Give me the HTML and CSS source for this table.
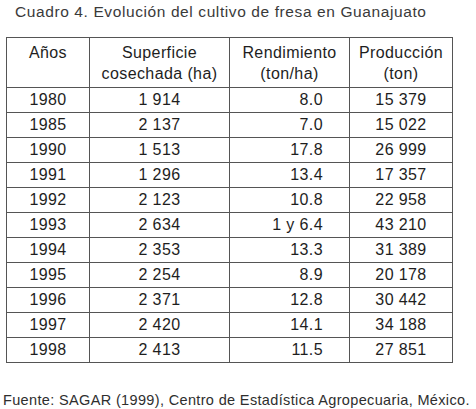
FILE: index.html
```html
<!DOCTYPE html>
<html lang="es">
<head>
<meta charset="utf-8">
<title>Cuadro 4</title>
<link rel="stylesheet" href="styles.css">
</head>
<body>
<div class="page">
  <p class="caption">Cuadro 4. Evolución del cultivo de fresa en Guanajuato</p>
  <table class="data">
    <colgroup>
      <col class="c1"><col class="c2"><col class="c3"><col class="c4">
    </colgroup>
    <thead>
      <tr>
        <th>Años<br>&nbsp;</th>
        <th>Superficie<br>cosechada (ha)</th>
        <th>Rendimiento<br>(ton/ha)</th>
        <th>Producción<br>(ton)</th>
      </tr>
    </thead>
    <tbody>
      <tr><td>1980</td><td>1 914</td><td class="r">8.0</td><td>15 379</td></tr>
      <tr><td>1985</td><td>2 137</td><td class="r">7.0</td><td>15 022</td></tr>
      <tr><td>1990</td><td>1 513</td><td class="r">17.8</td><td>26 999</td></tr>
      <tr><td>1991</td><td>1 296</td><td class="r">13.4</td><td>17 357</td></tr>
      <tr><td>1992</td><td>2 123</td><td class="r">10.8</td><td>22 958</td></tr>
      <tr><td>1993</td><td>2 634</td><td class="r">1 y 6.4</td><td>43 210</td></tr>
      <tr><td>1994</td><td>2 353</td><td class="r">13.3</td><td>31 389</td></tr>
      <tr><td>1995</td><td>2 254</td><td class="r">8.9</td><td>20 178</td></tr>
      <tr><td>1996</td><td>2 371</td><td class="r">12.8</td><td>30 442</td></tr>
      <tr><td>1997</td><td>2 420</td><td class="r">14.1</td><td>34 188</td></tr>
      <tr><td>1998</td><td>2 413</td><td class="r">11.5</td><td>27 851</td></tr>
    </tbody>
  </table>
  <p class="source">Fuente: SAGAR (1999), Centro de Estadística Agropecuaria, México.</p>
</div>
</body>
</html>
```

FILE: styles.css
```css
html, body {
  margin: 0;
  padding: 0;
  background: #ffffff;
}
.page {
  font-family: "Liberation Sans", Arial, sans-serif;
  color: #1e1e1e;
  padding: 3px 0 0 0;
}
.caption {
  margin: 0 0 0 15px;
  font-size: 15.5px;
  line-height: 18px;
  letter-spacing: 0.6px;
  color: #3a3a3a;
}
.data {
  margin: 16px 0 0 6px;
  border-collapse: collapse;
  table-layout: fixed;
  width: 446px;
  font-size: 16px;
  letter-spacing: 0.4px;
}
.c1 { width: 83px; }
.c2 { width: 140px; }
.c3 { width: 120px; }
.c4 { width: 103px; }
.data th,
.data td {
  border: 1px solid #555;
  padding: 0;
  text-align: center;
  font-weight: normal;
}
.data th {
  height: 48px;
  line-height: 21px;
  vertical-align: middle;
  padding-top: 1px;
}
.data td {
  height: 24px;
  line-height: 24px;
}
.data tbody tr + tr td {
  border-top: 1px solid #111;
}
.data td.r {
  text-align: right;
  padding-right: 26px;
}
.source {
  margin: 29px 0 0 3px;
  font-size: 14.5px;
  line-height: 16px;
  letter-spacing: 0.35px;
  color: #2e2e2e;
}
```
